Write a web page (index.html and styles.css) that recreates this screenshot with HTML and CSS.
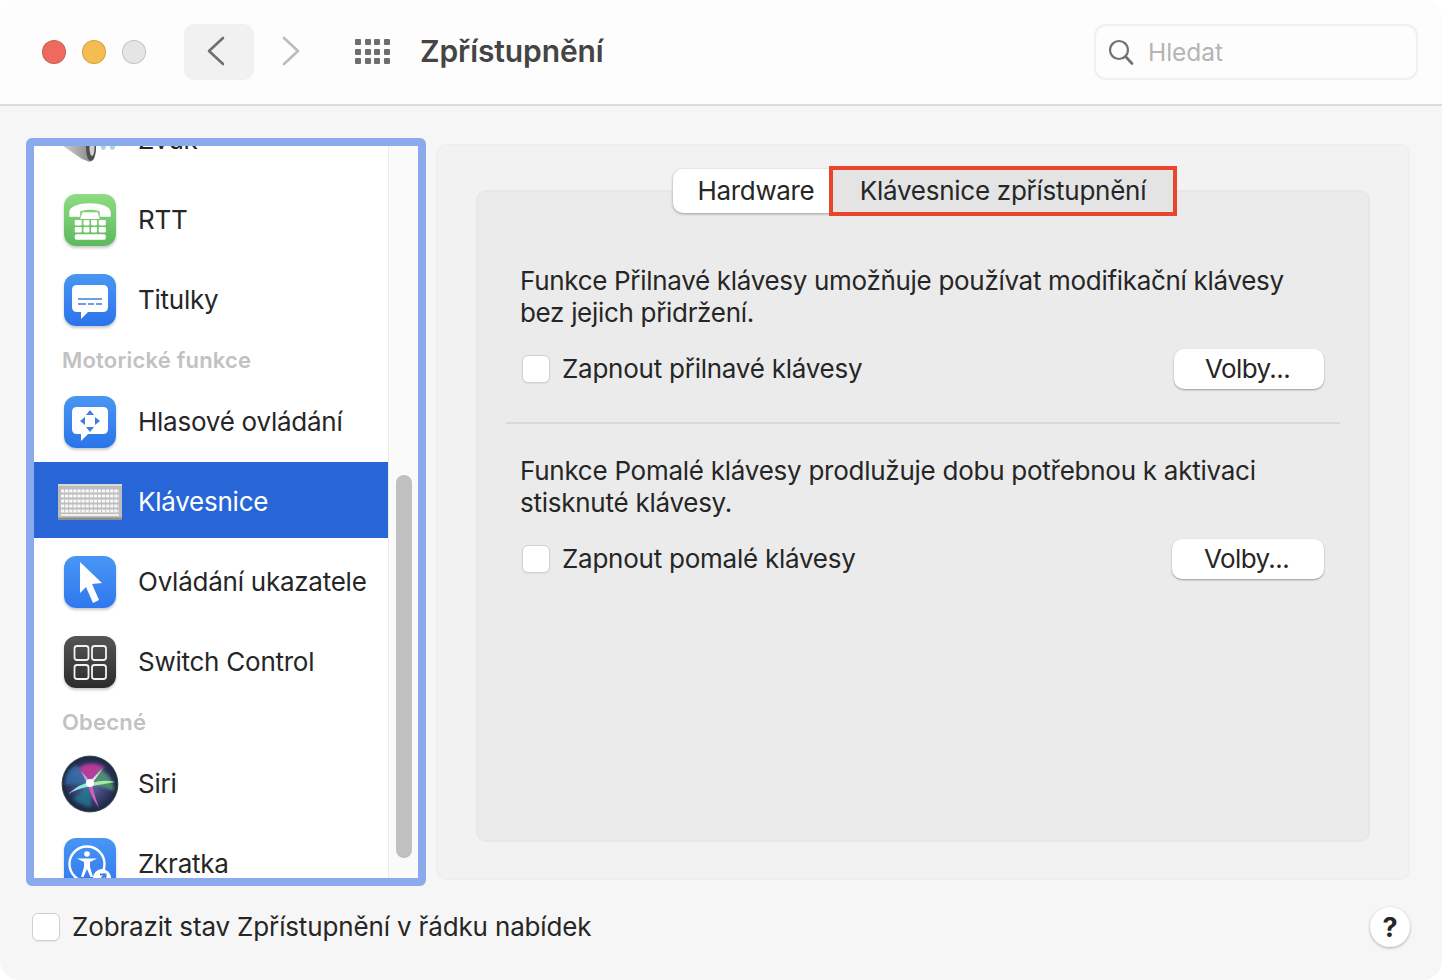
FILE: index.html
```html
<!DOCTYPE html>
<html lang="cs">
<head>
<meta charset="utf-8">
<title>Zpřístupnění</title>
<link rel="stylesheet" href="styles.css">
</head>
<body>
<div class="window">
  <header class="toolbar">
    <div class="lights"><span class="light red"></span><span class="light yellow"></span><span class="light gray"></span></div>
    <div class="nav-back"><svg width="20" height="30" viewBox="0 0 20 30"><path d="M17 2 L3 15 L17 28" fill="none" stroke="#6f6f6f" stroke-width="2.6" stroke-linecap="round" stroke-linejoin="round"/></svg></div>
    <div class="nav-forward"><svg width="20" height="30" viewBox="0 0 20 30"><path d="M3 2 L17 15 L3 28" fill="none" stroke="#bcbcbc" stroke-width="2.6" stroke-linecap="round" stroke-linejoin="round"/></svg></div>
    <div class="grid-icon"><i></i><i></i><i></i><i></i><i></i><i></i><i></i><i></i><i></i><i></i><i></i><i></i></div>
    <h1 class="title">Zpřístupnění</h1>
    <div class="search">
      <svg width="26" height="26" viewBox="0 0 26 26"><circle cx="11" cy="11" r="9" fill="none" stroke="#707070" stroke-width="2.2"/><path d="M17.5 17.5 L24 24.5" stroke="#707070" stroke-width="2.6" stroke-linecap="round"/></svg>
      <span>Hledat</span>
    </div>
  </header>

  <main class="content">
    <aside class="sidebar">
      <div class="list">
        <div class="row first">
          <span class="icon speaker"><svg width="60" height="52" viewBox="0 0 60 52"><defs><linearGradient id="cone" x1="0" y1="0" x2="1" y2="0"><stop offset="0" stop-color="#d0d0d0"/><stop offset="1" stop-color="#7e7e7e"/></linearGradient></defs><path d="M3 20 L20 26 L30 22 L36 40 L30 52 L22 49 L3 36Z" fill="url(#cone)"/><ellipse cx="31" cy="38" rx="5" ry="13" fill="#4e4e4e"/><ellipse cx="32" cy="38" rx="2.500" ry="8" fill="#cfcfcf"/><path d="M42 26 q3 8 4 12 q-3 4 -5 0 q0 -6 1 -12Z M52 26 q3 8 3 12 q-3 4 -5 0 q0 -6 2 -12Z" fill="#a8d4e4"/></svg></span>
          <span class="label">Zvuk</span>
        </div>
        <div class="row">
          <span class="icon app green"><svg width="48" height="48" viewBox="0 0 44 44"><path d="M3 15 C3 4 41 4 41 15 L41 19 L31 19 L31 14 C27 12 17 12 13 14 L13 19 L3 19Z" fill="#fff"/><path d="M15 15 L29 15 L31 21 L13 21Z" fill="#fff"/><g fill="#fff"><rect x="8" y="22" width="6.500" height="5" rx="1"/><rect x="16" y="22" width="5.500" height="5" rx="1"/><rect x="23" y="22" width="5.500" height="5" rx="1"/><rect x="30" y="22" width="6.500" height="5" rx="1"/><rect x="8" y="28.500" width="6.500" height="5" rx="1"/><rect x="16" y="28.500" width="5.500" height="5" rx="1"/><rect x="23" y="28.500" width="5.500" height="5" rx="1"/><rect x="30" y="28.500" width="6.500" height="5" rx="1"/><rect x="8" y="35" width="28.500" height="5" rx="1.500"/></g></svg></span>
          <span class="label">RTT</span>
        </div>
        <div class="row">
          <span class="icon app blue-b"><svg width="52" height="52" viewBox="0 0 52 52"><path d="M13 11 H39 Q44 11 44 16 V33 Q44 38 39 38 H24 L17 45 V38 H13 Q8 38 8 33 V16 Q8 11 13 11Z" fill="#fff"/><path d="M14 25 H38 M14 30 H22 M24 30 H30 M32 30 H38" stroke="#3d7fe0" stroke-width="1.500"/></svg></span>
          <span class="label">Titulky</span>
        </div>
        <div class="section">Motorické funkce</div>
        <div class="row">
          <span class="icon app blue-b"><svg width="52" height="52" viewBox="0 0 52 52"><path d="M13 11 H39 Q44 11 44 16 V33 Q44 38 39 38 H24 L17 45 V38 H13 Q8 38 8 33 V16 Q8 11 13 11Z" fill="#fff"/><path d="M26 14 L30 19 H22Z M26 36 L22 31 H30Z M16 25 L21 21 V29Z M36 25 L31 21 V29Z" fill="#3d7fe0"/></svg></span>
          <span class="label">Hlasové ovládání</span>
        </div>
        <div class="row selected">
          <span class="icon raw"><svg width="64" height="36" viewBox="0 0 64 36"><rect x="0" y="0" width="64" height="36" rx="1" fill="#bdbdbd"/><rect x="0" y="0" width="64" height="2" fill="#d8d8d8"/><rect x="0" y="33.500" width="64" height="2.500" fill="#8e8e8e"/><g stroke="#f8f8f8" stroke-width="3" stroke-dasharray="3.200 .9"><path d="M3 7 H61"/><path d="M3 12 H61"/><path d="M3 17 H61"/><path d="M3 22 H61"/><path d="M3 27 H61"/></g><path d="M3 31 H61" stroke="#eeeeee" stroke-width="2"/></svg></span>
          <span class="label">Klávesnice</span>
        </div>
        <div class="row">
          <span class="icon app blue-a"><svg width="52" height="52" viewBox="0 0 52 52"><path d="M16 6 L38 27 L28 28 L35 44 L29 47 L22 31 L16 37Z" fill="#fff"/></svg></span>
          <span class="label">Ovládání ukazatele</span>
        </div>
        <div class="row">
          <span class="icon app dark"><svg width="52" height="52" viewBox="0 0 52 52"><g fill="none" stroke="#f2f2f2" stroke-width="1.800"><rect x="10.500" y="10" width="14" height="14" rx="2.500"/><rect x="28" y="10" width="14" height="14" rx="2.500"/><rect x="10.500" y="29" width="14" height="14" rx="2.500"/><rect x="28" y="29" width="14" height="14" rx="2.500"/></g></svg></span>
          <span class="label">Switch Control</span>
        </div>
        <div class="section">Obecné</div>
        <div class="row">
          <span class="icon raw"><svg width="58" height="58" viewBox="0 0 58 58"><defs><radialGradient id="siriBase" cx="50%" cy="50%" r="50%"><stop offset="0" stop-color="#6a6fb0"/><stop offset=".8" stop-color="#28305a"/><stop offset=".95" stop-color="#1d2a3c"/><stop offset="1" stop-color="#64767c"/></radialGradient><filter id="soft" x="-20%" y="-20%" width="140%" height="140%"><feGaussianBlur stdDeviation="1.800"/></filter><filter id="softer" x="-20%" y="-20%" width="140%" height="140%"><feGaussianBlur stdDeviation=".7"/></filter><clipPath id="siriClip"><circle cx="29" cy="29" r="27"/></clipPath></defs><circle cx="29" cy="29" r="28.500" fill="url(#siriBase)"/><g clip-path="url(#siriClip)"><path d="M10 20 Q24 2 44 12 L30 28Z" fill="#c23a9c" filter="url(#soft)" opacity=".9"/><path d="M4 30 Q4 14 16 10 L28 28Z" fill="#2f6fa8" filter="url(#soft)" opacity=".85"/><path d="M38 14 Q52 20 53 36 L32 29Z" fill="#4f9a70" filter="url(#soft)" opacity=".85"/><path d="M12 44 Q24 52 30 52 L29 30Z" fill="#1f7f90" filter="url(#soft)" opacity=".7"/></g><g filter="url(#softer)"><path d="M7 39 Q20 28 30 27 L32 31 Q20 32 7 39Z" fill="#86f0dc"/><path d="M30 28 Q44 24 54 27 Q44 29 31 31Z" fill="#a6e8a8"/><path d="M27 30 L31 30 Q34 42 38 53 Q30 42 27 30Z" fill="#d060b8"/><path d="M20 16 Q26 22 29 27 L27 30 Q24 24 20 16Z" fill="#b8a8e8"/><path d="M42 13 Q36 22 31 29 L28 27 Q36 19 42 13Z" fill="#e0d8f0"/></g><circle cx="29" cy="28" r="4" fill="#fff" filter="url(#softer)"/></svg></span>
          <span class="label">Siri</span>
        </div>
        <div class="row">
          <span class="icon app blue-a"><svg width="52" height="52" viewBox="0 0 52 52"><circle cx="23" cy="26" r="17.500" fill="none" stroke="#fff" stroke-width="2.400"/><circle cx="23" cy="16" r="2.800" fill="#fff"/><path d="M13 20.500 L33 20.500 L26 24 V29 L29 39 H26.500 L23 31 L19.500 39 H17 L20 29 V24Z" fill="#fff"/><circle cx="38" cy="40" r="9" fill="#fff"/><path d="M34.500 43.500 L41 37 M36 36.500 H41.500 V42" fill="none" stroke="#3d7fe0" stroke-width="2"/></svg></span>
          <span class="label">Zkratka</span>
        </div>
      </div>
      <div class="track"><div class="thumb"></div></div>
    </aside>

    <section class="panel">
      <div class="tabs">
        <div class="tab active">Hardware</div>
        <div class="tab marked">Klávesnice zpřístupnění</div>
      </div>
      <div class="inner">
        <div class="block">
          <p>Funkce Přilnavé klávesy umožňuje používat modifikační klávesy<br>bez jejich přidržení.</p>
          <div class="option">
            <span class="check"></span><span class="option-label">Zapnout přilnavé klávesy</span>
            <button class="btn">Volby...</button>
          </div>
        </div>
        <div class="divider"></div>
        <div class="block second">
          <p>Funkce Pomalé klávesy prodlužuje dobu potřebnou k aktivaci<br>stisknuté klávesy.</p>
          <div class="option">
            <span class="check"></span><span class="option-label">Zapnout pomalé klávesy</span>
            <button class="btn wide">Volby...</button>
          </div>
        </div>
      </div>
    </section>
  </main>

  <footer class="bottom">
    <span class="check"></span><span class="bottom-label">Zobrazit stav Zpřístupnění v řádku nabídek</span>
    <span class="help">?</span>
  </footer>
</div>
</body>
</html>
```

FILE: styles.css
```css
* { box-sizing: border-box; }
html, body { margin: 0; padding: 0; background: #fff; }
body { font-family: Inter, "Noto Sans", sans-serif; color: #262626; }
.window { width: 1442px; height: 980px; background: #f6f6f6; border-radius: 20px; overflow: hidden; display: flex; flex-direction: column; }

.toolbar { height: 106px; flex: none; background: #fdfdfd; border-bottom: 2px solid #dcdcdc; display: flex; align-items: flex-start; padding: 24px 24px 0 42px; }
.lights { display: flex; gap: 16px; margin-top: 16px; }
.light { width: 24px; height: 24px; border-radius: 50%; border: 1px solid rgba(0,0,0,.14); }
.red { background: #ee6a5f; }
.yellow { background: #f5bd4f; }
.gray { background: #e5e5e5; }
.nav-back { width: 70px; height: 56px; margin-left: 38px; background: #f1f1f1; border-radius: 11px; display: flex; align-items: center; justify-content: center; }
.nav-back svg { margin-right: 6px; margin-top: -2px; }
.nav-forward { width: 20px; height: 30px; margin: 12px 0 0 27px; }
.grid-icon { display: grid; grid-template-columns: repeat(4, 6px); grid-auto-rows: 6px; gap: 3.500px 3.500px; margin: 15px 0 0 54px; width: 36px; }
.grid-icon i { background: #6e6e6e; border-radius: 1px; display: block; }
.title { margin: 8px 0 0 29px; font-size: 30px; line-height: 38px; font-weight: 600; color: #444; letter-spacing: -.1px; white-space: nowrap; }
.search { margin-left: auto; width: 324px; height: 56px; border: 2px solid #f0f0f0; border-radius: 12px; display: flex; align-items: center; padding-left: 12px; background: #fdfdfd; }
.search svg { margin-top: -1px; }
.search span { margin-left: 14px; font-size: 24.500px; color: #b4b4b4; letter-spacing: -.05px; }

.content { flex: none; height: 774px; display: flex; padding: 32px 32px 0 26px; gap: 10px; align-items: flex-start; }

.sidebar { width: 400px; height: 748px; flex: none; border: 8px solid #8aaaec; border-radius: 6px; background: #fff; display: flex; overflow: hidden; }
.list { width: 354px; flex: none; height: 100%; overflow: hidden; background: #fff; }
.row { height: 80px; display: flex; align-items: center; position: relative; }
.row.first { margin-top: -46px; }
.row.selected { color: #fff; }
.row.selected::before { content: ""; position: absolute; left: 0; right: 0; top: 0; height: 76px; background: #2866d8; }
.icon { position: relative; width: 104px; flex: none; display: flex; justify-content: center; }
.raw { padding-left: 8px; }
.speaker { padding-left: 8px; margin-bottom: 8px; }
.app { width: 52px; height: 52px; margin: 0 22px 0 30px; padding: 0; border-radius: 12px; align-items: center; box-shadow: 0 2px 3px rgba(0,0,0,.22); }
.green { background: linear-gradient(#8fdc82, #5db85c); }
.blue-a { background: linear-gradient(#4896f5, #2f78ee); }
.blue-b { background: linear-gradient(#4a96f2, #2a74ea); }
.dark { background: linear-gradient(#555, #2c2c2c); }
.label { position: relative; font-size: 26px; line-height: 32px; white-space: nowrap; letter-spacing: -.25px; }
.section { height: 42px; padding: 3px 0 0 28px; font-size: 22px; line-height: 34px; font-weight: 600; color: #c2c2c2; letter-spacing: .2px; }
.track { flex: 1; background: #fafafa; border-left: 1px solid #ececec; padding: 329px 5px 0 7px; }
.thumb { width: 16px; height: 383px; border-radius: 8px; background: #c0c0c0; }

.panel { width: 974px; height: 736px; margin-top: 6px; background: #f2f2f2; border: 2px solid #efefef; border-radius: 10px; position: relative; padding: 44px 38px 0; }
.tabs { position: absolute; top: 20px; left: 235px; display: flex; align-items: center; font-size: 26px; z-index: 1; }
.tab { height: 44px; display: flex; align-items: center; justify-content: center; padding-bottom: 2px; }
.active { width: 158px; background: #fff; border-radius: 10px 0 0 10px; box-shadow: 0 1px 3px rgba(0,0,0,.35); padding-left: 8px; letter-spacing: -.35px; }
.marked { width: 348px; height: 50px; margin-left: -2px; background: #e4e4e4; border: 4px solid #e8452c; position: relative; letter-spacing: -.26px; }
.inner { height: 652px; background: #ebebeb; border: 2px solid #e7e7e7; border-radius: 10px; padding: 72px 28px 0; }
.block { padding: 1px 0 0 14px; }
.block p { margin: 0; font-size: 26px; line-height: 32px; white-space: nowrap; letter-spacing: -.31px; }
.option { display: flex; align-items: center; margin-top: 20px; height: 40px; }
.check { width: 28px; height: 28px; flex: none; background: #fff; border: 1px solid #cfcfcf; border-radius: 6px; box-shadow: 0 1px 1px rgba(0,0,0,.06); display: inline-block; margin-left: 2px; }
.option-label { margin-left: 12px; margin-bottom: 2px; font-size: 26px; white-space: nowrap; letter-spacing: -.25px; }
.btn { margin-left: auto; margin-right: 16px; width: 150px; height: 40px; border: 0; border-radius: 10px; background: #fff; font: 26px Inter, "Noto Sans", sans-serif; letter-spacing: -.6px; color: #262626; box-shadow: 0 1px 2px rgba(0,0,0,.35); padding: 0 3px 2px 0; }
.btn.wide { width: 152px; }
.divider { height: 2px; background: #d9d9d9; margin-top: 33px; }
.second { margin-top: 31px; padding-top: 0; }
.second p { letter-spacing: -.26px; }

.bottom { flex: 1; display: flex; align-items: center; padding: 0 32px 6px 30px; position: relative; }
.bottom-label { margin-left: 12px; margin-bottom: 1px; font-size: 26px; white-space: nowrap; letter-spacing: -.15px; }
.help { margin-left: auto; width: 40px; height: 40px; border-radius: 50%; background: #fff; box-shadow: 0 1px 3px rgba(0,0,0,.3); display: flex; align-items: center; justify-content: center; font-size: 27px; font-weight: 700; }
```
